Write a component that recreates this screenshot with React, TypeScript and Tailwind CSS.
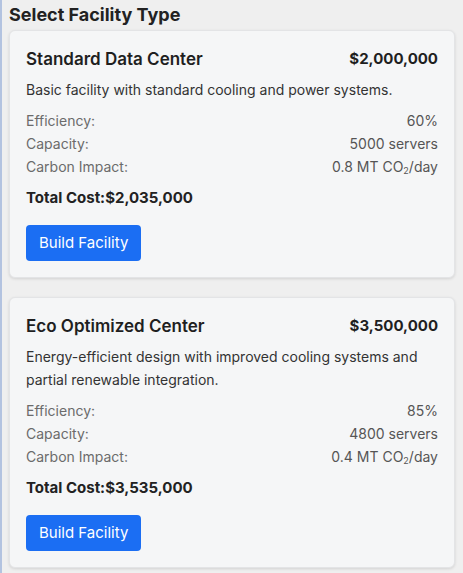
import React from 'react';

type Facility = {
  id: string;
  name: string;
  price: string;
  description: string;
  efficiency: string;
  capacity: string;
  carbon: string;
  totalCost: string;
};

const facilities: Facility[] = [
  {
    id: 'standard',
    name: 'Standard Data Center',
    price: '$2,000,000',
    description: 'Basic facility with standard cooling and power systems.',
    efficiency: '60%',
    capacity: '5000 servers',
    carbon: '0.8',
    totalCost: '$2,035,000',
  },
  {
    id: 'eco',
    name: 'Eco Optimized Center',
    price: '$3,500,000',
    description: 'Energy-efficient design with improved cooling systems and partial renewable integration.',
    efficiency: '85%',
    capacity: '4800 servers',
    carbon: '0.4',
    totalCost: '$3,535,000',
  },
];

const FacilityCard: React.FC<{ facility: Facility }> = ({ facility }) => {
  return (
    <div className="mb-[19px] rounded-md border border-[#e3e4e6] bg-[#f5f6f7] p-4 shadow-[0_1px_3px_rgba(0,0,0,0.12)]">
      <div className="flex items-center justify-between">
        <h3 className="text-[17px] leading-6 font-semibold text-[#1f1f1f]">{facility.name}</h3>
        <span className="text-[15px] leading-6 font-bold text-[#1f1f1f]">{facility.price}</span>
      </div>
      <p className="mt-[7px] pr-4 text-[14px] leading-[23px] text-[#333]">{facility.description}</p>
      <div className="mt-2 text-[14px] leading-[23px]">
        <div className="flex justify-between">
          <span className="text-[#6b6b6b]">Efficiency:</span>
          <span className="text-[#555]">{facility.efficiency}</span>
        </div>
        <div className="flex justify-between">
          <span className="text-[#6b6b6b]">Capacity:</span>
          <span className="text-[#555]">{facility.capacity}</span>
        </div>
        <div className="flex justify-between">
          <span className="text-[#6b6b6b]">Carbon Impact:</span>
          <span className="text-[#555]">
            {facility.carbon} MT CO<sub className="text-[9px]">2</sub>/day
          </span>
        </div>
      </div>
      <p className="mt-2 text-[15px] leading-6 font-bold text-[#222]">Total Cost:{facility.totalCost}</p>
      <button className="mt-[15px] h-9 rounded-[4px] bg-[#1b6ef3] px-[13px] text-[15px] text-white">
        Build Facility
      </button>
    </div>
  );
};

export default function App() {
  return (
    <div
      className="min-h-[573px] border-l-2 border-[#b3c3e0] bg-[#efefef] pl-[7px] pr-2"
      style={{ fontFamily: 'Inter, "Noto Sans", sans-serif' }}
    >
      <h2 className="pt-[1px] text-[18px] leading-[27px] font-bold text-[#222]">Select Facility Type</h2>
      <div className="mt-[2px]">
        {facilities.map((f) => (
          <FacilityCard key={f.id} facility={f} />
        ))}
      </div>
    </div>
  );
}
